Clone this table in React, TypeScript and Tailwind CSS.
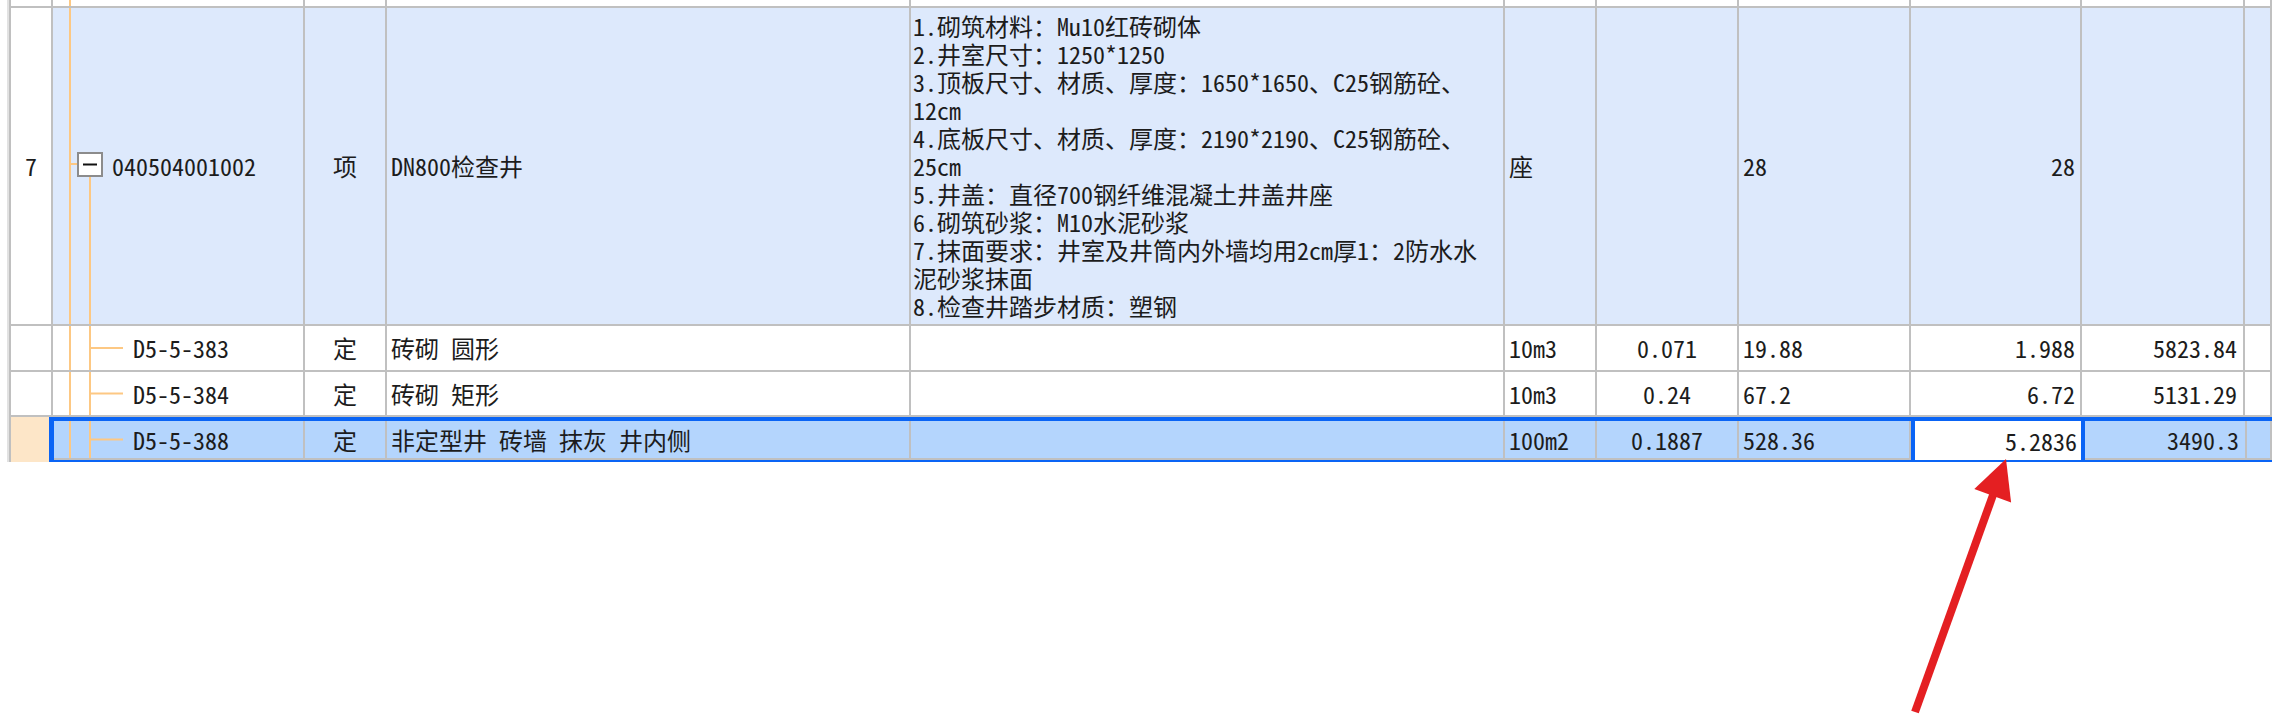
import clsx from "clsx";
import type { ReactNode } from "react";

const desc = [
  "1.砌筑材料：Mu10红砖砌体",
  "2.井室尺寸：1250*1250",
  "3.顶板尺寸、材质、厚度：1650*1650、C25钢筋砼、",
  "12cm",
  "4.底板尺寸、材质、厚度：2190*2190、C25钢筋砼、",
  "25cm",
  "5.井盖：直径700钢纤维混凝土井盖井座",
  "6.砌筑砂浆：M10水泥砂浆",
  "7.抹面要求：井室及井筒内外墙均用2cm厚1：2防水水",
  "泥砂浆抹面",
  "8.检查井踏步材质：塑钢",
];

const children = [
  { code: "D5-5-383", name: "砖砌 圆形", unit: "10m3", content: "0.071", qty: "19.88", qty2: "1.988", price: "5823.84", h: "h-[46px]" },
  { code: "D5-5-384", name: "砖砌 矩形", unit: "10m3", content: "0.24", qty: "67.2", qty2: "6.72", price: "5131.29", h: "h-[45px]" },
];

const TREE = "#fdc883";

function Cell({ className, children }: { className?: string; children?: ReactNode }) {
  return (
    <div className={clsx("shrink-0 flex items-center border-r-2 border-b-2 border-[#c0c0c0] overflow-hidden whitespace-nowrap", className)}>
      {children}
    </div>
  );
}

function ChildTree({ off = 0 }: { off?: number }) {
  return (
    <svg width={80 - off} className="h-full shrink-0">
      <line x1={17 - off} x2={17 - off} y1="0" y2="100%" stroke={TREE} strokeWidth={2} />
      <line x1={37 - off} x2={37 - off} y1="0" y2="100%" stroke={TREE} strokeWidth={2} />
      <line x1={37 - off} x2={70 - off} y1="50%" y2="50%" stroke={TREE} strokeWidth={2} />
    </svg>
  );
}

export default function App() {
  return (
    <div className="relative w-[2272px] h-[714px] bg-white overflow-hidden text-[24px] text-[#1c1c1c] font-['Noto_Sans_Mono_CJK_SC','Noto_Sans_CJK_SC',sans-serif]">
      <div className="ml-[7px] border-l-2 border-[#e2e2e2] flex flex-col">
        {/* partial row above */}
        <div className="flex h-[8px]">
          <Cell className="w-[44px] border-l-2" />
          <Cell className="w-[252px] items-stretch">
            <svg width={20} className="h-full">
              <line x1={17} x2={17} y1="0" y2="100%" stroke={TREE} strokeWidth={2} />
            </svg>
          </Cell>
          <Cell className="w-[82px]" />
          <Cell className="w-[524px]" />
          <Cell className="w-[594px]" />
          <Cell className="w-[92px]" />
          <Cell className="w-[142px]" />
          <Cell className="w-[172px]" />
          <Cell className="w-[171px]" />
          <Cell className="w-[163px]" />
          <Cell className="flex-1" />
        </div>

        {/* item row 7 */}
        <div className="flex h-[318px] bg-[#dde9fc]">
          <Cell className="w-[44px] border-l-2 bg-white justify-center">7</Cell>
          <Cell className="w-[252px]">
            <svg width={59} className="h-full shrink-0">
              <line x1={17} x2={17} y1="0" y2="100%" stroke={TREE} strokeWidth={2} />
              <line x1={17} x2={24} y1={156} y2={156} stroke={TREE} strokeWidth={2} />
              <line x1={37} x2={37} y1={169} y2="100%" stroke={TREE} strokeWidth={2} />
              <rect x={25} y={145} width={24} height={23} fill="white" stroke="#8c8c8c" strokeWidth={2} />
              <line x1={30} x2={44} y1={156.5} y2={156.5} stroke="#111" strokeWidth={2} />
            </svg>
            <span>040504001002</span>
          </Cell>
          <Cell className="w-[82px] justify-center">项</Cell>
          <Cell className="w-[524px] pl-[4px]">DN800检查井</Cell>
          <Cell className="w-[594px] pl-[2px]">
            <div className="flex flex-col">
              {desc.map((l, i) => (
                <div key={i} className="leading-[28px]">{l}</div>
              ))}
            </div>
          </Cell>
          <Cell className="w-[92px] pl-[4px]">座</Cell>
          <Cell className="w-[142px]" />
          <Cell className="w-[172px] pl-[4px]">28</Cell>
          <Cell className="w-[171px] justify-end pr-[5px]">28</Cell>
          <Cell className="w-[163px]" />
          <Cell className="flex-1" />
        </div>

        {children.map((r) => (
          <div key={r.code} className={clsx("flex", r.h)}>
            <Cell className="w-[44px] border-l-2" />
            <Cell className="w-[252px] items-stretch">
              <ChildTree />
              <span className="self-center">{r.code}</span>
            </Cell>
            <Cell className="w-[82px] justify-center">定</Cell>
            <Cell className="w-[524px] pl-[4px]">{r.name}</Cell>
            <Cell className="w-[594px]" />
            <Cell className="w-[92px] pl-[4px]">{r.unit}</Cell>
            <Cell className="w-[142px] justify-center">{r.content}</Cell>
            <Cell className="w-[172px] pl-[4px]">{r.qty}</Cell>
            <Cell className="w-[171px] justify-end pr-[5px]">{r.qty2}</Cell>
            <Cell className="w-[163px] justify-end pr-[6px]">{r.price}</Cell>
            <Cell className="flex-1" />
          </div>
        ))}

        {/* selected row */}
        <div className="flex h-[45px]">
          <div className="w-[40px] shrink-0 border-l-2 border-[#c0c0c0] bg-[#fde6c8]" />
          <div className="flex-1 flex border-l-[5px] border-t-4 border-b-2 border-[#0a64f5] bg-[#b4d5fd]">
            <Cell className="w-[251px] border-b-0 items-stretch">
              <ChildTree off={1} />
              <span className="self-center">D5-5-388</span>
            </Cell>
            <Cell className="w-[82px] border-b-0 justify-center">定</Cell>
            <Cell className="w-[524px] border-b-0 pl-[4px]">非定型井 砖墙 抹灰 井内侧</Cell>
            <Cell className="w-[594px] border-b-0" />
            <Cell className="w-[92px] border-b-0 pl-[4px]">100m2</Cell>
            <Cell className="w-[142px] border-b-0 justify-center">0.1887</Cell>
            <Cell className="w-[172px] border-b-0 pl-[4px]">528.36</Cell>
            <div className="w-[174px] shrink-0 flex items-center justify-end pr-[4px] bg-white border-x-4 border-[#0a64f5]">5.2836</div>
            <Cell className="w-[162px] border-b-0 justify-end pr-[6px]">3490.3</Cell>
            <Cell className="flex-1 border-b-0" />
          </div>
        </div>
      </div>

      {/* annotation arrow */}
      <svg className="absolute left-[1900px] top-[450px]" width={130} height={264}>
        <line x1={15} y1={262} x2={93} y2={45} stroke="#e41f22" strokeWidth={8} />
        <polygon points="106,9 111.1,52.4 74.3,39" fill="#e41f22" />
      </svg>
    </div>
  );
}
